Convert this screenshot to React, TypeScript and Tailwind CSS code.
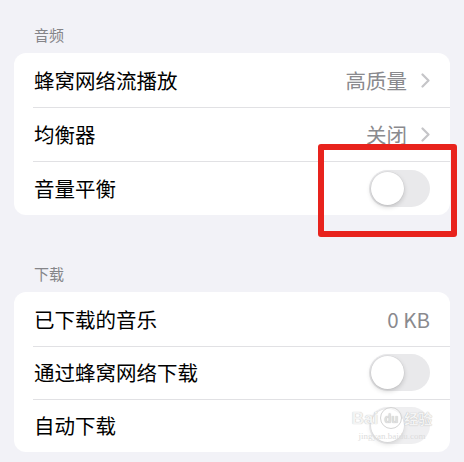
import React from "react";

const font = {
  fontFamily: '"Noto Sans CJK SC", "Noto Sans", sans-serif',
};

function Chevron() {
  return (
    <svg width="9" height="15" viewBox="0 0 9 15" className="ml-[14px]">
      <path
        d="M1.5 1.5 L7.5 7.5 L1.5 13.5"
        fill="none"
        stroke="#c5c5c8"
        strokeWidth="2.2"
        strokeLinecap="round"
        strokeLinejoin="round"
      />
    </svg>
  );
}

function Toggle() {
  return (
    <div className="relative h-[37px] w-[61px] rounded-full bg-[#e9e9eb]">
      <div className="absolute left-[2px] top-[2px] h-[33px] w-[33px] rounded-full bg-white shadow-[0_2px_5px_rgba(0,0,0,0.18),0_0_0_0.5px_rgba(0,0,0,0.06)]" />
    </div>
  );
}

type RowProps = {
  label: string;
  value?: string;
  chevron?: boolean;
  toggle?: boolean;
  first?: boolean;
  h: string;
};

function Row({ label, value, chevron, toggle, first, h }: RowProps) {
  return (
    <div className={`relative flex items-center pl-[20px] pr-[20px] ${h}`}>
      {!first && (
        <div className="absolute left-[19px] right-0 top-0 h-px bg-[#e1e1e4]" />
      )}
      <span className="flex-1 text-[20.5px] leading-none text-black">
        {label}
      </span>
      {value && (
        <span className="text-[20.5px] leading-none text-[#8a8a8e]">
          {value}
        </span>
      )}
      {chevron && <Chevron />}
      {toggle && <Toggle />}
    </div>
  );
}

function Header({ children }: { children: React.ReactNode }) {
  return (
    <div className="h-[20px] pl-[34px] text-[15px] leading-[20px] text-[#858589]">
      {children}
    </div>
  );
}

export default function App() {
  return (
    <div
      className="relative h-[462px] w-[464px] overflow-hidden bg-[#f2f2f7]"
      style={font}
    >
      <div className="pt-[25px]">
        <Header>音频</Header>
        <div className="mx-[14px] mt-[8px] overflow-hidden rounded-[12px] bg-white">
          <Row label="蜂窝网络流播放" value="高质量" chevron first h="h-[54px]" />
          <Row label="均衡器" value="关闭" chevron h="h-[54px]" />
          <Row label="音量平衡" toggle h="h-[54px]" />
        </div>

        <div className="mt-[49px]">
          <Header>下载</Header>
        </div>
        <div className="mx-[14px] mt-[8px] overflow-hidden rounded-[12px] bg-white">
          <Row label="已下载的音乐" value="0 KB" first h="h-[54px]" />
          <Row label="通过蜂窝网络下载" toggle h="h-[53px]" />
          <Row label="自动下载" toggle h="h-[53px]" />
        </div>
      </div>

      {/* red highlight frame around the balance switch */}
      <div className="absolute left-[318px] top-[144px] h-[93px] w-[139px] rounded-[3px] border-[6px] border-[#e8231d]" />

      {/* site watermark */}
      <div className="absolute left-[344px] top-[404px] h-[44px] w-[98px] rounded-[12px] bg-white/30 blur-[3px]" />
      <div className="absolute left-[346px] top-[407px] flex w-[92px] flex-col items-center">
        <div className="flex items-center gap-[2px] text-[17px] font-bold leading-none text-[#f4f4f4] [text-shadow:0_0_1px_rgba(0,0,0,0.3)]">
          <span style={{ fontFamily: '"Liberation Sans", sans-serif' }}>Bai</span>
          <span className="flex h-[22px] w-[22px] items-center justify-center rounded-full border border-[#d4d4d4] bg-white/60 text-[11px] text-[#e0e0e0]">
            du
          </span>
          <span className="text-[14px]">经验</span>
        </div>
        <div
          className="mt-[3px] text-[9px] leading-none text-[#dcdcdc]"
          style={{ fontFamily: '"Liberation Serif", serif' }}
        >
          jingyan.baidu.com
        </div>
      </div>
    </div>
  );
}
